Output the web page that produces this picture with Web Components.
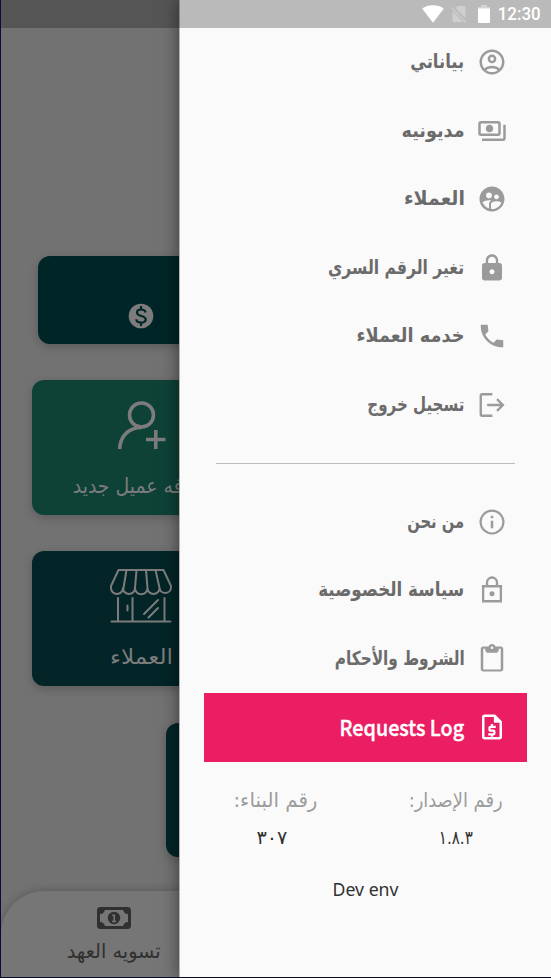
<!DOCTYPE html>
<html lang="ar">
<head>
<meta charset="utf-8">
<title>القائمة</title>
<style>
html,body{margin:0;height:100%;overflow:hidden}
body{font-family:"DejaVu Sans","Noto Sans",sans-serif}
</style>
</head>
<body>
<app-screen></app-screen>
<script>
const define=(name,css,html,ready)=>{
  const t=document.createElement('template');
  t.innerHTML=`<style>*{box-sizing:border-box}${css}</style>${html}`;
  customElements.define(name,class extends HTMLElement{
    constructor(){super();this.attachShadow({mode:'open'}).append(t.content.cloneNode(true));}
    connectedCallback(){ready&&ready.call(this,this.shadowRoot);}
  });
};

const icons={
 account:'<path d="M12 2C6.48 2 2 6.48 2 12s4.48 10 10 10 10-4.48 10-10S17.52 2 12 2zM7.35 18.5C8.66 17.56 10.26 17 12 17s3.34.56 4.65 1.5c-1.31.94-2.91 1.5-4.65 1.5s-3.34-.56-4.65-1.5zm10.79-1.38C16.45 15.8 14.32 15 12 15s-4.45.8-6.14 2.12C4.7 15.73 4 13.95 4 12c0-4.42 3.58-8 8-8s8 3.58 8 8c0 1.95-.7 3.73-1.86 5.12zM12 6c-1.93 0-3.5 1.57-3.5 3.5S10.07 13 12 13s3.500-1.57 3.500-3.500S13.930 6 12 6zm0 5c-.83 0-1.500-.67-1.500-1.500S11.170 8 12 8s1.500.67 1.500 1.500S12.830 11 12 11z"/>',
 payments:'<path d="M19 14V6c0-1.100-.9-2-2-2H3c-1.100 0-2 .9-2 2v8c0 1.100.9 2 2 2h14c1.100 0 2-.9 2-2zm-2 0H3V6h14v8zm-7-7c-1.660 0-3 1.340-3 3s1.340 3 3 3 3-1.340 3-3-1.340-3-3-3zm13 0v11c0 1.100-.9 2-2 2H4v-2h17V7h2z"/>',
 users:'<path d="M11.990 2c-5.520 0-10 4.480-10 10s4.480 10 10 10 10-4.480 10-10-4.480-10-10-10zm3.610 6.340c1.070 0 1.930.86 1.930 1.930 0 1.070-.86 1.930-1.930 1.930-1.070 0-1.930-.86-1.930-1.930-.01-1.070.86-1.930 1.930-1.930zm-6-1.580c1.300 0 2.360 1.060 2.360 2.360 0 1.300-1.060 2.360-2.360 2.360-1.300 0-2.360-1.060-2.360-2.360 0-1.310 1.050-2.360 2.360-2.360zm0 9.130v3.750c-2.400-.75-4.300-2.600-5.140-4.960 1.050-1.120 3.670-1.690 5.140-1.690.53 0 1.200.08 1.900.22-1.640.87-1.900 2.020-1.900 2.680zM11.990 20c-.27 0-.53-.01-.79-.04v-4.070c0-1.420 2.940-2.130 4.400-2.130 1.070 0 2.920.39 3.840 1.150-1.170 2.970-4.060 5.090-7.450 5.090z"/>',
 lock:'<path d="M18 8h-1V6c0-2.760-2.240-5-5-5S7 3.240 7 6v2H6c-1.100 0-2 .9-2 2v10c0 1.100.9 2 2 2h12c1.100 0 2-.9 2-2V10c0-1.100-.9-2-2-2zm-6 9c-1.100 0-2-.9-2-2s.9-2 2-2 2 .9 2 2-.9 2-2 2zm3.100-9H8.900V6c0-1.710 1.390-3.100 3.100-3.100 1.710 0 3.100 1.390 3.100 3.100v2z"/>',
 phone:'<path d="M21 15.460l-5.270-.61-2.520 2.520c-2.830-1.440-5.150-3.750-6.590-6.590l2.530-2.530L8.540 3H3.030C2.450 13.180 10.820 21.550 21 20.970v-5.510z"/>',
 logout:'<path d="M12.300 3.400H4.200Q3 3.400 3 4.600v14.800q0 1.200 1.200 1.200h8.100" fill="none" stroke="currentColor" stroke-width="1.900"/><path d="M8.100 12h12.300M16 7.300l4.700 4.700-4.700 4.700" fill="none" stroke="currentColor" stroke-width="1.900"/>',
 info:'<circle cx="12" cy="12" r="9.150" fill="none" stroke="currentColor" stroke-width="1.700"/><path d="M11 7h2v2h-2zM11 11h2v6h-2z"/>',
 lockline:'<path d="M4.900 9h14.200v12H4.900zM8 9V6a4 4 0 0 1 8 0v3" fill="none" stroke="currentColor" stroke-width="1.850"/><circle cx="12" cy="15" r="2"/>',
 clipboard:'<path d="M19 2h-4.180C14.400.84 13.300 0 12 0c-1.300 0-2.400.84-2.820 2H5c-1.100 0-2 .9-2 2v16c0 1.100.9 2 2 2h14c1.100 0 2-.9 2-2V4c0-1.100-.9-2-2-2zm-7 0c.55 0 1 .45 1 1s-.45 1-1 1-1-.45-1-1 .45-1 1-1zm7 18.300H5V3.700h1.600V4.500Q6.600 7 9.100 7h5.800Q17.400 7 17.400 4.500V3.700H19v16.600z"/>',
 quote:'<path fill-rule="evenodd" d="M14.500 2H6C4.900 2 4 2.900 4 4v16c0 1.100.9 2 2 2h12c1.100 0 2-.9 2-2V7.500L14.500 2zM18 20H6V4h7.500v4.500H18V20z"/><path d="M15 11.900h-4.300a.7.7 0 0 0-.7.700v1.600a.7.7 0 0 0 .7.700h2.500a.7.7 0 0 1 .7.700v1.500a.7.7 0 0 1-.7.700H9M12 9.600v2M12 17.900v1.800" fill="none" stroke="currentColor" stroke-width="1.800"/>',
 wifi:'<path d="M12 21.500L.3 6.200C5.500 1.200 18.500 1.200 23.700 6.200z"/>'
};
// Inline vector glyph chosen by its name attribute
define('app-icon',':host{display:block;width:30px;height:30px;flex:none}svg{display:block;width:100%;height:100%;fill:currentColor}','<svg viewBox="0 0 24 24"></svg>',
 function(r){r.querySelector('svg').innerHTML=icons[this.getAttribute('name')]||'';});

// One-line label condensed or widened to its w attribute
define('fit-text',':host{display:flex;flex:none;justify-content:center;white-space:nowrap;line-height:1;align-items:center}span{display:block;flex:none;transform-origin:center}','<span><slot></slot></span>',
 function(r){const s=r.querySelector('span'),w=+this.getAttribute('w');if(!w)return;
  s.style.transform='none';this.style.width=w+'px';
  s.style.transform=`scaleX(${w/s.getBoundingClientRect().width})`;});

define('menu-item',`:host{display:flex;height:68.5px;padding:0 20px;gap:12px;align-items:center;direction:rtl;color:#9b9b9b}
 .t{color:#6b6b6b;font-size:19.5px;font-weight:bold;padding-bottom:1px}
 :host([active]){background:#eb1e63;color:#fff}
 :host([active]) .t{color:#fff;font:500 21.500px "Noto Sans CJK SC",sans-serif;padding:0 0 2px;-webkit-text-stroke:.4px #fff}`,
 '<app-icon></app-icon><fit-text class="t"><slot></slot></fit-text>',
 function(r){const i=r.querySelector('app-icon');i.setAttribute('name',this.getAttribute('icon'));i.connectedCallback();
  const t=r.querySelector('.t');t.setAttribute('w',this.getAttribute('w'));t.connectedCallback();});

define('version-cell',`:host{display:flex;flex-direction:column;align-items:center;direction:rtl}
 .l{height:28px;color:#9c9c9c;font-size:20px}.v{height:22px;margin-top:14px;color:#303030;font-size:18.500px}
 :host([shift]) .v{margin-right:7px}`,
 '<fit-text class="l"><slot></slot></fit-text><fit-text class="v"><slot name="value"></slot></fit-text>',
 function(r){for(const [c,a] of [['.l','lw'],['.v','vw']]){const e=r.querySelector(c);e.setAttribute('w',this.getAttribute(a));e.connectedCallback();}});

define('side-drawer',`:host{display:flex;flex-direction:column;background:#fafafa;border-left:1px solid #b4b4b4;padding:28px 24.500px 0 24px;box-shadow:0 0 16px rgba(0,0,0,.5)}
 hr{border:0;height:1px;background:#bdbdbd;margin:24px 12px 23.500px;flex:none}
 .v{display:flex;justify-content:space-between;direction:ltr;padding:24px 24px 0 29px}
 .env{align-self:center;margin-top:27px;height:24px;font:18.500px "Noto Sans",sans-serif;color:#303030}`,
 `<menu-item icon="account" w="54">بياناتي</menu-item>
 <menu-item icon="payments" w="63">مديونيه</menu-item>
 <menu-item icon="users" w="61">العملاء</menu-item>
 <menu-item icon="lock" w="136">تغير الرقم السري</menu-item>
 <menu-item icon="phone" w="108">خدمه العملاء</menu-item>
 <menu-item icon="logout" w="97">تسجيل خروج</menu-item>
 <hr>
 <menu-item icon="info" w="57">من نحن</menu-item>
 <menu-item icon="lockline" w="146">سياسة الخصوصية</menu-item>
 <menu-item icon="clipboard" w="130">الشروط والأحكام</menu-item>
 <menu-item active icon="quote" w="124.500">Requests Log</menu-item>
 <div class="v"><version-cell shift lw="84" vw="31">رقم البناء:<span slot="value">٣٠٧</span></version-cell>
 <version-cell lw="94" vw="34">رقم الإصدار:<span slot="value">١.٨.٣</span></version-cell></div>
 <fit-text class="env" w="66">Dev env</fit-text>`);

define('dash-card',`:host{display:flex;flex-direction:column;align-items:center;flex:none;width:220px;height:135px;border-radius:12px;
 background:#032527;color:#7c7c7c;box-shadow:0 3px 10px rgba(0,0,0,.2);font-size:18.500px}svg{display:block;fill:none;stroke:currentColor}`,'<slot></slot>');

define('home-page',`:host{display:flex;flex-direction:column;background:#727272;border-left:1px solid #0c0c3c;padding-top:256px;overflow:hidden}
 dash-card{margin:0 0 36px 30.500px}svg{fill:none;stroke:currentColor}
 .wallet{width:208px;height:88px;margin-left:36.500px;padding-top:47px;background:#002526}
 .add{background:#0e4237;padding-top:20px}.shop{padding-top:17px;margin-bottom:37px}.part{margin-left:165px;margin-bottom:34px;height:134px}
 dash-card svg{margin-left:-1px}
 fit-text{height:26px}.add fit-text{margin-top:23px;font-size:21px}.shop fit-text{margin-top:20px;font-size:21px}
 nav{flex:1;border-radius:43px 0 0 0;background:#767676;box-shadow:0 -1px 9px rgba(0,0,0,.2);color:#303030;padding:16px 0 0 65.500px;font-size:20px}
 nav div{width:94px;display:flex;flex-direction:column;align-items:center}nav fit-text{margin-top:9px}`,
 `<dash-card class="wallet"><svg width="26" height="26" viewBox="0 0 26 26"><circle cx="13" cy="13" r="12.300" fill="currentColor" stroke="none"/><path d="M17.500 9.500c-.5-4-8.500-4-8.500 0 0 4.500 8.700 2.500 8.700 7 0 4.200-9.200 4.200-9.400-.2M13 3v3.500M13 19.300V23" stroke="#002526" stroke-width="2.200"/></svg></dash-card>
 <dash-card class="add"><svg width="50" height="50" viewBox="0 0 50 50" stroke-width="3.600"><circle cx="25.500" cy="15" r="12"/><path d="M3.700 49C4 37 12 27.500 25.500 27.500M39.800 30v19M30 39.500h19.500"/></svg><fit-text w="137">إضافه عميل جديد</fit-text></dash-card>
 <dash-card class="shop"><svg width="62" height="56" viewBox="0 0 62 56" stroke-width="2" stroke-linecap="round" stroke-linejoin="round"><path d="M8.500 2h45L61 18v2a5.800 5.800 0 0 1-11.500 0 6 6 0 0 1-12 0 6 6 0 0 1-12.500 0 6 6 0 0 1-12 0A5.800 5.800 0 0 1 1 20v-2zM16.500 2L13.500 20M26.500 2L25 20M36 2l1.500 18M45.500 2l4 18M1.500 53.500h59M8 30v23M22.500 30v23M54.500 30v23M17.500 37.500v5M34 46l14-14M38.500 49.500L48 40"/></svg><fit-text w="63">العملاء</fit-text></dash-card>
 <dash-card class="part"></dash-card>
 <nav><div><svg width="34" height="22" viewBox="0 0 34 22"><rect x="1.500" y="1.500" width="31" height="19" rx="2" stroke-width="3"/><path d="M2 2h6a5 5 0 0 1-6 5zM32 2v5a5 5 0 0 1-6-5zM2 20v-5a5 5 0 0 1 6 5zM32 20h-6a5 5 0 0 1 6-5z" fill="currentColor" stroke="none"/><circle cx="17" cy="11" r="6.200" fill="currentColor" stroke="none"/><path d="M15.300 8.300h1.900v6M15 14.500h4.200" stroke="#767676" stroke-width="1.600"/></svg><fit-text w="94">تسويه العهد</fit-text></div></nav>`);

define('status-bar',`:host{display:flex;align-items:center;justify-content:flex-end;height:28px;background:rgba(0,0,0,.255);color:#fff;padding-right:10px;font:500 17.500px Roboto,sans-serif}
 app-icon{width:22px;height:22px;margin-right:7px}svg{fill:currentColor;flex:none}.sim{margin-right:11px;opacity:.3}.bat{margin-right:8px}fit-text{padding-top:2px}`,
 `<app-icon name="wifi"></app-icon><svg class="sim" width="16" height="18" viewBox="0 0 16 18"><path d="M6.500 1H13q1.500 0 1.500 1.500V13.500L4.500 3zM1.500 6L12 17H3q-1.500 0-1.500-1.500z"/><path d="M.5 2.500L15 17.500" stroke="#fff" stroke-width="1.100"/></svg>
 <svg class="bat" width="12" height="18" viewBox="0 0 12 18"><path d="M3 0h6v2h3v3H0V2h3z" opacity=".4"/><path d="M0 3.500h12V17q0 1-1 1H1q-1 0-1-1z"/></svg><fit-text w="43">12:30</fit-text>`);

define('app-screen',`:host{display:block;position:relative;width:551px;height:978px;overflow:hidden;background:#0c0c2c}
 home-page{width:100%;height:977px}side-drawer{position:absolute;top:0;right:0;width:372px;height:977px}status-bar{position:absolute;top:0;left:1px;right:0}`,
 '<home-page></home-page><side-drawer></side-drawer><status-bar></status-bar>');
</script>
</body>
</html>
